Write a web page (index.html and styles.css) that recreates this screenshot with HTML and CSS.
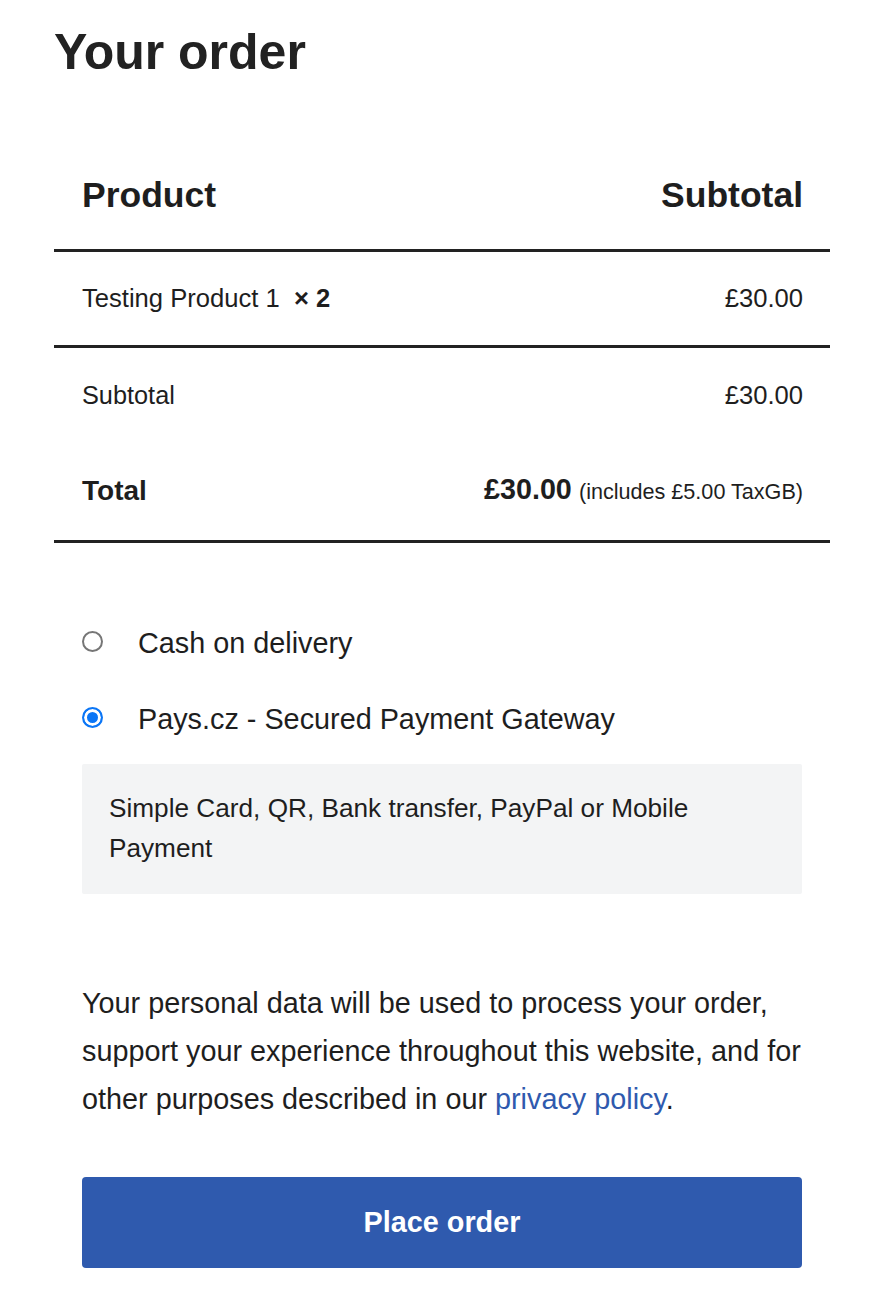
FILE: index.html
```html
<!DOCTYPE html>
<html lang="en">
<head>
<meta charset="utf-8">
<title>Your order</title>
<link rel="stylesheet" href="styles.css">
</head>
<body>
<div class="checkout">
  <h1 class="title">Your order</h1>
  <table class="order-table">
    <thead>
      <tr>
        <th class="col-name">Product</th>
        <th class="col-total">Subtotal</th>
      </tr>
    </thead>
    <tbody>
      <tr class="cart-item">
        <td class="col-name">Testing Product 1&nbsp; <strong class="qty">×&nbsp;2</strong></td>
        <td class="col-total">£30.00</td>
      </tr>
    </tbody>
    <tfoot>
      <tr class="subtotal-row">
        <th class="col-name plain">Subtotal</th>
        <td class="col-total">£30.00</td>
      </tr>
      <tr class="total-row">
        <th class="col-name">Total</th>
        <td class="col-total"><strong class="amount">£30.00</strong> <small class="tax">(includes £5.00 TaxGB)</small></td>
      </tr>
    </tfoot>
  </table>

  <div class="payment">
    <ul class="methods">
      <li class="method">
        <span class="radio"></span>
        <label class="method-label">Cash on delivery</label>
      </li>
      <li class="method">
        <span class="radio checked"></span>
        <label class="method-label">Pays.cz - Secured Payment Gateway</label>
      </li>
    </ul>
    <div class="method-box">Simple Card, QR, Bank transfer, PayPal or Mobile Payment</div>

    <p class="privacy">Your personal data will be used to process your order, support your experience throughout this website, and for other purposes described in our <a href="#" class="link">privacy policy</a>.</p>

    <button class="place-order" type="button">Place order</button>
  </div>
</div>
</body>
</html>
```

FILE: styles.css
```css
html, body {
  margin: 0;
  padding: 0;
  background: #fff;
}

body {
  font-family: "Liberation Sans", Arial, sans-serif;
  color: #1e1e1e;
}

.checkout {
  width: 776px;
  padding: 22px 0 40px 54px;
}

.title {
  margin: 0;
  font-size: 50px;
  line-height: 60px;
  font-weight: 700;
  color: #222;
}

.order-table {
  width: 100%;
  margin-top: 59px;
  border-collapse: collapse;
  font-size: 25.6px;
}

.order-table th,
.order-table td {
  padding: 0 27px 0 28px;
}

.order-table thead th {
  font-size: 35.5px;
  line-height: 40px;
  padding-top: 34px;
  padding-bottom: 34px;
  font-weight: 700;
  border-bottom: 3px solid #222;
}

.col-name { text-align: left; }
.col-total { text-align: right; }

.cart-item td {
  line-height: 29px;
  padding-top: 32px;
  padding-bottom: 32px;
  border-bottom: 3px solid #222;
}

.qty { font-weight: 700; }

.subtotal-row th,
.subtotal-row td {
  line-height: 30px;
  padding-top: 32px;
  padding-bottom: 32px;
}

.plain { font-weight: 400; font-size: 25.3px; }

.total-row th,
.total-row td {
  line-height: 30px;
  padding-top: 32px;
  padding-bottom: 33px;
  border-bottom: 3px solid #222;
}

.total-row th { font-weight: 700; font-size: 28px; }

.amount { font-size: 28.7px; font-weight: 700; }
.tax { font-size: 21.6px; }

.payment {
  padding: 62px 28px 0 28px;
}

.methods {
  list-style: none;
  margin: 0;
  padding: 0;
}

.method {
  display: flex;
  align-items: center;
  padding: 18px 0;
  line-height: 40px;
  font-size: 28.8px;
}

.radio {
  flex: none;
  width: 21px;
  height: 21px;
  box-sizing: border-box;
  border: 2px solid #767676;
  border-radius: 50%;
  background: #fff;
  margin: 0 35px 0 0;
  position: relative;
  top: -2px;
}

.radio.checked {
  border-color: #0b76f6;
  background: #0b76f6;
  box-shadow: inset 0 0 0 3px #fff;
}

.method-box {
  margin-top: 7px;
  background: #f3f4f5;
  padding: 24px 27px 26px 27px;
  font-size: 26.2px;
  line-height: 40px;
  border-radius: 2px;
}

.privacy {
  margin: 85px 0 0 0;
  font-size: 28.8px;
  line-height: 48px;
}

.link {
  color: #2f5aae;
  text-decoration: none;
}

.place-order {
  display: block;
  width: 100%;
  height: 91px;
  margin-top: 54px;
  border: 0;
  border-radius: 4px;
  background: #2f5aae;
  color: #fff;
  font-family: "Liberation Sans", Arial, sans-serif;
  font-size: 28.8px;
  font-weight: 700;
}
```
